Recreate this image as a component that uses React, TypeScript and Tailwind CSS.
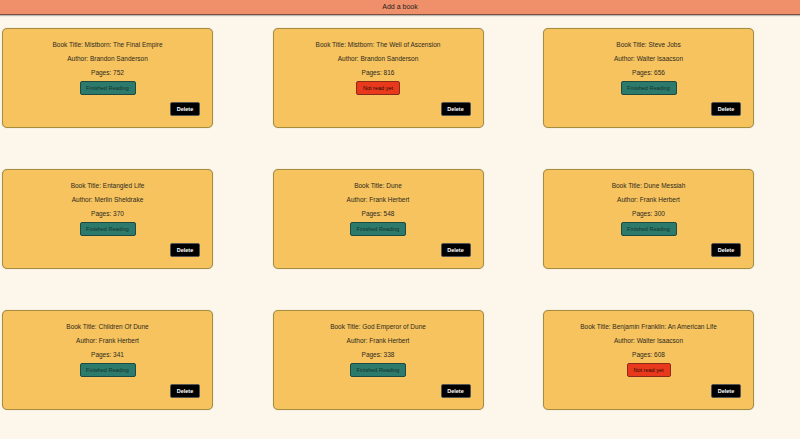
import React from "react";

type Book = {
  title: string;
  author: string;
  pages: number;
  read: boolean;
};

const books: Book[] = [
  { title: "Mistborn: The Final Empire", author: "Brandon Sanderson", pages: 752, read: true },
  { title: "Mistborn: The Well of Ascension", author: "Brandon Sanderson", pages: 816, read: false },
  { title: "Steve Jobs", author: "Walter Isaacson", pages: 656, read: true },
  { title: "Entangled Life", author: "Merlin Sheldrake", pages: 370, read: true },
  { title: "Dune", author: "Frank Herbert", pages: 548, read: true },
  { title: "Dune Messiah", author: "Frank Herbert", pages: 300, read: true },
  { title: "Children Of Dune", author: "Frank Herbert", pages: 341, read: true },
  { title: "God Emperor of Dune", author: "Frank Herbert", pages: 338, read: true },
  { title: "Benjamin Franklin: An American Life", author: "Walter Isaacson", pages: 608, read: false },
];

const BookCard: React.FC<{ book: Book }> = ({ book }) => {
  return (
    <div className="flex h-[100px] flex-col items-center rounded-[5px] border border-[#a58d3e] bg-[#f6c35f] pt-[8.5px] shadow-[0_0_1px_rgba(0,0,0,0.3)]">
      <p className="h-[14px] text-[6.5px] leading-[14px]">Book Title: {book.title}</p>
      <p className="h-[14px] text-[6.5px] leading-[14px]">Author: {book.author}</p>
      <p className="h-[14px] text-[6.5px] leading-[14px]">Pages: {book.pages}</p>
      {book.read ? (
        <button className="mt-[1px] h-[14px] w-[56px] rounded-[2px] border border-[#1d4a42] bg-[#2b7a6b] text-[5.5px] leading-[12px] text-[#17302b]">
          Finished Reading
        </button>
      ) : (
        <button className="mt-[1px] h-[14px] w-[44px] rounded-[2px] border border-[#8a2a1a] bg-[#e8391d] text-[5.5px] leading-[12px] text-[#2a0a05]">
          Not read yet
        </button>
      )}
      <button className="mr-[12px] mt-[7px] h-[14px] w-[30px] self-end rounded-[2px] border border-[#555] bg-black text-[5.5px] font-bold leading-[12px] text-white">
        Delete
      </button>
    </div>
  );
};

export default function App() {
  return (
    <div className="min-h-[439px] bg-[#fdf6ea] font-['Liberation_Sans',Arial,sans-serif] text-[#2e2a1c]">
      <header className="flex h-[15px] items-center justify-center border-b border-[#7a5040] bg-[#f0906b] text-[7px] text-[#222] shadow-[0_1px_1px_rgba(0,0,0,0.25)]">
        Add a book
      </header>
      <main className="grid grid-cols-[211px_211px_211px] gap-x-[59.5px] gap-y-[41px] pl-[2px] pt-[13px]">
        {books.map((b) => (
          <BookCard key={b.title} book={b} />
        ))}
      </main>
    </div>
  );
}
